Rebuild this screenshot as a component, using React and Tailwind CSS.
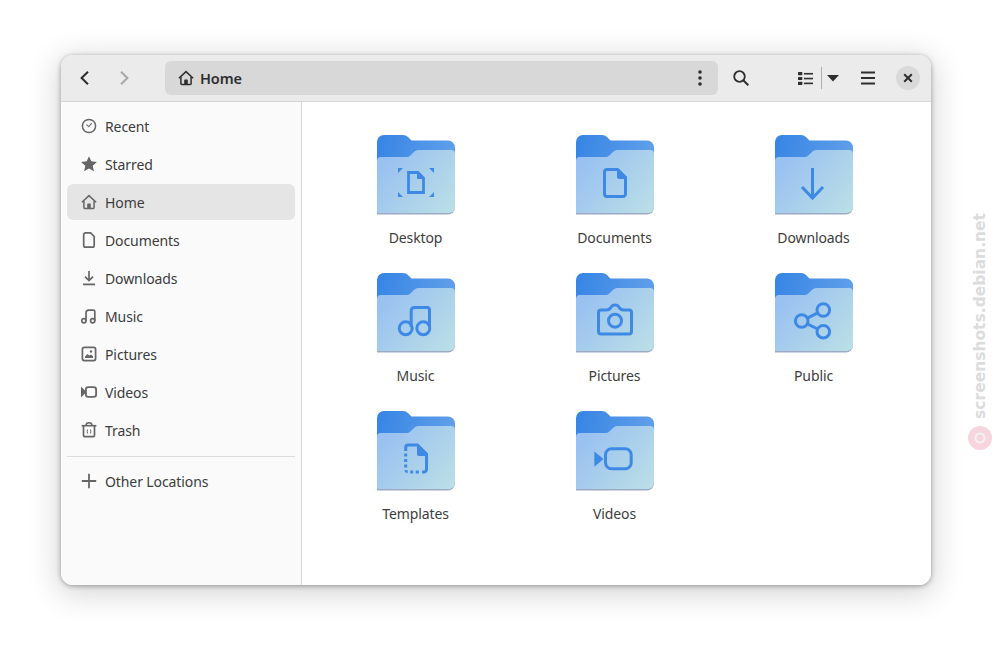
import { useId } from "react"

const uiFont = "font-['Noto_Sans','Open_Sans',sans-serif]"

// 16x16 symbolic icons, same look as the Adwaita set
const Glyph = ({ children, className = "" }) => (
  <svg
    viewBox="0 0 16 16"
    fill="none"
    stroke="currentColor"
    strokeWidth="1.5"
    className={`w-4 h-4 shrink-0 ${className}`}
  >
    {children}
  </svg>
)

const sidebarIcons = {
  recent: (
    <>
      <circle cx="8" cy="8" r="6.6" />
      <path d="M5.4 6.6 7.8 8.6 10.8 5.2" strokeWidth="1.1" />
    </>
  ),
  starred: <path d="M8 .2 10.300 5.300 15.900 5.900 11.700 9.700 12.900 15.300 8 12.500 3.100 15.300 4.300 9.700.1 5.900 5.700 5.300Z" fill="currentColor" stroke="none" />,
  home: (
    <>
      <path d="M.9 8.200 8 1.600l7.100 6.600" />
      <path d="M2.900 7v6.600c0 .6.400 1 1 1h8.200c.6 0 1-.4 1-1V7" />
      <path d="M6.200 14.500V10c0-.4.200-.6.600-.6h2.400c.4 0 .6.200.6.600v4.500Z" fill="currentColor" stroke="none" />
    </>
  ),
  documents: <path d="M4.400.9h5.200l3.600 3.600v8.900c0 1-.7 1.700-1.700 1.700H4.400c-1 0-1.700-.7-1.700-1.700V2.600c0-1 .7-1.700 1.700-1.700Z" strokeWidth="1.700" />,
  downloads: (
    <>
      <path d="M8 1v9M4 6.600 8 10.600l4-4" strokeWidth="1.700" />
      <path d="M2 14.400h12" strokeWidth="1.800" />
    </>
  ),
  music: (
    <>
      <circle cx="2.900" cy="12.800" r="2.100" strokeWidth="1.700" />
      <circle cx="11.700" cy="12.800" r="2.100" strokeWidth="1.700" />
      <path d="M5 12.800V5c0-1.900 1-2.900 2.900-2.900h4.400c1 0 1.500.5 1.500 1.500v9.200" strokeWidth="1.700" />
    </>
  ),
  pictures: (
    <>
      <rect x="1.400" y="1.400" width="13.200" height="13.200" rx="2" strokeWidth="1.700" />
      <path d="M4 12V10.500l2.500-2.500 1.800 1.600 1.800-1.100L12 10.300V12Z" fill="currentColor" stroke="none" />
      <circle cx="10" cy="5.500" r="1.200" fill="currentColor" stroke="none" />
    </>
  ),
  videos: (
    <>
      <path d="M0 2.500 4.500 7v2L0 13.500Z" fill="currentColor" stroke="none" />
      <rect x="4.900" y="3.200" width="10.200" height="9.600" rx="2.400" strokeWidth="1.800" />
    </>
  ),
  trash: (
    <>
      <path d="M.6 3.700h14.800" strokeWidth="1.600" />
      <path d="M5 3.500c0-1.800 1-2.700 3-2.700s3 .9 3 2.700" />
      <path d="M2.500 4v9c0 1 .7 1.700 1.700 1.700h7.600c1 0 1.700-.7 1.700-1.700V4" strokeWidth="1.700" />
      <path d="M6.500 7.500c-.4 1.300-.4 2.700 0 4M9.500 7.500c.4 1.300.4 2.700 0 4" strokeWidth="1" />
    </>
  ),
  plus: <path d="M8 .8v14.400M.8 8h14.400" strokeWidth="1.800" />,
}

const places = [
  { label: "Recent", icon: "recent" },
  { label: "Starred", icon: "starred" },
  { label: "Home", icon: "home", active: true },
  { label: "Documents", icon: "documents" },
  { label: "Downloads", icon: "downloads" },
  { label: "Music", icon: "music" },
  { label: "Pictures", icon: "pictures" },
  { label: "Videos", icon: "videos" },
  { label: "Trash", icon: "trash" },
]

function SidebarRow({ label, icon, active }) {
  return (
    <div className={`h-9 flex items-center gap-2 pl-[14px] rounded-md text-[#3d3d3d] ${active ? "bg-[#e5e5e5]" : ""}`}>
      <Glyph className="text-[#666666]">{sidebarIcons[icon]}</Glyph>
      <span className="pt-[2px] text-[14px] tracking-[-0.1px] leading-none">{label}</span>
    </div>
  )
}

function Folder({ children }) {
  const id = useId()
  return (
    <svg viewBox="0 0 78 80" className="w-[78px] h-20">
      <defs>
        <linearGradient id={`${id}b`} x1="0" y1="0" x2="78" y2="24" gradientUnits="userSpaceOnUse">
          <stop offset="0" stopColor="#3584e4" />
          <stop offset="1" stopColor="#62a0ea" />
        </linearGradient>
        <linearGradient id={`${id}f`} x1="8" y1="26" x2="72" y2="80" gradientUnits="userSpaceOnUse">
          <stop offset="0" stopColor="#99c1f1" />
          <stop offset="1" stopColor="#bbdfe6" />
        </linearGradient>
      </defs>
      <path d="M0 7a7 7 0 0 1 7-7H26q3 0 5 2l3.500 3.500H71a7 7 0 0 1 7 7V30H0Z" fill={`url(#${id}b)`} />
      <path d="M0 60H78V72.500a7 7 0 0 1-7 7H0Z" fill="#9daac4" />
      <path
        d="M0 26q0-4 4-4H30q1.500 0 3-1.300l4.500-4.200q1.500-1.500 3.500-1.500H74q4 0 4 4V72a6 6 0 0 1-6 6H0Z"
        fill={`url(#${id}f)`}
      />
      <g fill="none" stroke="#3e89e6" strokeWidth="3">
        {children}
      </g>
    </svg>
  )
}

const files = [
  {
    label: "Desktop",
    glyph: (
      <>
        <path d="M31.500 37.500H41L46.500 43V57.500H31.500Z" strokeWidth="2.800" />
        <path d="M40 37v7h7Z" fill="#3e89e6" stroke="none" />
        <path d="M21 33h5l-5 5ZM57 33h-5l5 5ZM21 62h5l-5-5ZM57 62h-5l5-5Z" fill="#3e89e6" stroke="none" />
      </>
    ),
  },
  {
    label: "Documents",
    glyph: (
      <>
        <path d="M31 34.500H41.500L49.500 42.500V59a2.500 2.500 0 0 1-2.500 2.500H31A2.500 2.500 0 0 1 28.500 59V37A2.500 2.500 0 0 1 31 34.500Z" />
        <path d="M41 34h2L51 42v2H43a2 2 0 0 1-2-2Z" fill="#3e89e6" stroke="none" />
      </>
    ),
  },
  {
    label: "Downloads",
    glyph: <path d="M37.500 33V63M27 52 37.500 63 48 52" />,
  },
  {
    label: "Music",
    glyph: (
      <>
        <circle cx="28.700" cy="55.300" r="6.500" />
        <circle cx="46.300" cy="55.300" r="6.500" />
        <path d="M34.200 54V37.500a3 3 0 0 1 3-3H50a2.500 2.500 0 0 1 2.500 2.500V54" />
      </>
    ),
  },
  {
    label: "Pictures",
    glyph: (
      <>
        <path d="M25 37H30.500Q33 37 34.500 35L35.500 33.500Q36.500 32 39 32T42.500 33.500L43.500 35Q45 37 47.500 37H53A2.500 2.500 0 0 1 55.500 39.500V58.500A2.500 2.500 0 0 1 53 61H25A2.500 2.500 0 0 1 22.500 58.500V39.500A2.500 2.500 0 0 1 25 37Z" />
        <circle cx="39" cy="47.700" r="6.500" />
      </>
    ),
  },
  {
    label: "Public",
    glyph: (
      <>
        <circle cx="48.300" cy="37" r="6.300" />
        <circle cx="26.700" cy="48" r="6.300" />
        <circle cx="48.300" cy="58.700" r="6.300" />
        <path d="M32.300 45.200 42.700 39.800M32.300 50.800 42.700 56" />
      </>
    ),
  },
  {
    label: "Templates",
    glyph: (
      <>
        <path d="M28.700 40V36.500a2.500 2.500 0 0 1 2.500-2.500H40.500L49.500 43V58.500a2.500 2.500 0 0 1-2.500 2.500H45" />
        <path d="M40 34h2L51 43v2H42a2 2 0 0 1-2-2Z" fill="#3e89e6" stroke="none" />
        <path d="M28.700 42.500V58.500q0 2.500 2.500 2.500H43" strokeDasharray="3 2.500" />
      </>
    ),
  },
  {
    label: "Videos",
    glyph: (
      <>
        <path d="M18.300 40.500 27 47.500v1L18.300 55.700Z" fill="#3e89e6" stroke="none" />
        <rect x="29.500" y="37.800" width="25.700" height="20" rx="6" />
      </>
    ),
  },
]

export default function App() {
  return (
    <div className={`relative w-[992px] h-[652px] pl-[61px] pt-[55px] bg-white ${uiFont}`}>
      <div className="w-[870px] h-[530px] flex flex-col rounded-xl overflow-hidden bg-white shadow-[0_1px_5px_rgba(0,0,0,0.35),0_6px_30px_4px_rgba(0,0,0,0.16)]">
        {/* Header bar */}
        <header className="h-[47px] shrink-0 flex items-center bg-[#ebebeb] border-b border-[#d6d6d6] text-[#2e2e2e]">
          <div className="w-[104px] flex items-center pl-[16px] gap-[23px]">
            <Glyph className="text-[#2e2e2e]">
              <path d="M11 1.800 4.600 8l6.400 6.200" strokeWidth="2" />
            </Glyph>
            <Glyph className="text-[#a8a8a8]">
              <path d="M5 1.800 11.400 8 5 14.200" strokeWidth="2" />
            </Glyph>
          </div>
          <div className="w-[553px] h-[34px] flex items-center rounded-md bg-[#d8d8d8] pl-[13px] pr-[16px]">
            <Glyph>{sidebarIcons.home}</Glyph>
            <span className="ml-[6px] text-[14.500px] tracking-[-0.1px] leading-none font-semibold">Home</span>
            <svg viewBox="0 0 4 16" className="ml-auto w-1 h-4" fill="currentColor">
              <circle cx="2" cy="2" r="1.800" />
              <circle cx="2" cy="8" r="1.800" />
              <circle cx="2" cy="14" r="1.800" />
            </svg>
          </div>
          <Glyph className="ml-[15px]">
            <circle cx="6.500" cy="6.500" r="5.300" strokeWidth="1.800" />
            <path d="M10.500 10.500 15.300 15.300" strokeWidth="2" />
          </Glyph>
          <svg viewBox="0 0 14 14" className="ml-[49px] w-[15px] h-[15px]" fill="currentColor">
            <rect x="0" y="1" width="4" height="3" rx=".5" />
            <rect x="0" y="5.500" width="4" height="3" rx=".5" />
            <rect x="0" y="10" width="4" height="3" rx=".5" />
            <rect x="5.500" y="1.800" width="8.500" height="1.500" />
            <rect x="5.500" y="6.300" width="8.500" height="1.500" />
            <rect x="5.500" y="10.800" width="8.500" height="1.500" />
          </svg>
          <div className="ml-[8px] w-px h-[22px] bg-[#b0b0b0]" />
          <svg viewBox="0 0 12 7" className="ml-[5px] w-3 h-[7px]" fill="currentColor">
            <path d="M0 0h12L6 6.500Z" />
          </svg>
          <svg viewBox="0 0 14 14" className="ml-[22px] w-[14px] h-[14px]" fill="currentColor">
            <rect x="0" y="0.500" width="14" height="2" />
            <rect x="0" y="6" width="14" height="2" />
            <rect x="0" y="11.500" width="14" height="2" />
          </svg>
          <button className="ml-[21px] w-6 h-6 flex items-center justify-center rounded-full bg-[#d9d9d9]">
            <svg viewBox="0 0 10 10" className="w-[10px] h-[10px]" fill="none" stroke="currentColor" strokeWidth="2">
              <path d="M1.200 1.200 8.800 8.800M8.800 1.200 1.200 8.800" />
            </svg>
          </button>
        </header>

        <div className="flex flex-1 min-h-0">
          {/* Sidebar */}
          <aside className="w-[241px] shrink-0 bg-[#fafafa] border-r border-[#d8d8d8] px-[6px] pt-[6px]">
            <div className="flex flex-col gap-[2px]">
              {places.map((place) => (
                <SidebarRow key={place.label} {...place} />
              ))}
            </div>
            <div className="mt-[8px] mb-[6px] h-px bg-[#dcdcdc]" />
            <SidebarRow label="Other Locations" icon="plus" />
          </aside>

          {/* File grid */}
          <main className="flex-1 bg-white pl-[14px] pt-[33px]">
            <div className="grid grid-cols-[repeat(3,199px)] auto-rows-[138px]">
              {files.map((file) => (
                <div key={file.label} className="flex flex-col items-center">
                  <Folder>{file.glyph}</Folder>
                  <span className="mt-[14px] text-[14px] tracking-[-0.1px] leading-[18px] text-[#3d3d3d]">{file.label}</span>
                </div>
              ))}
            </div>
          </main>
        </div>
      </div>

      {/* Watermark */}
      <div className="absolute left-[971px] top-[213px] flex flex-col items-center">
        <span className="[writing-mode:vertical-rl] rotate-180 font-['DejaVu_Sans',sans-serif] font-bold text-[15.500px] leading-[18px] text-[#dcdcdc]">
          screenshots.debian.net
        </span>
      </div>
      <svg viewBox="0 0 24 24" className="absolute left-[968px] top-[426px] w-6 h-6">
        <circle cx="12" cy="12" r="12" fill="#f6d5de" />
        <circle cx="12" cy="12" r="4.500" fill="none" stroke="#f2f2f2" strokeWidth="2" />
      </svg>
    </div>
  )
}
